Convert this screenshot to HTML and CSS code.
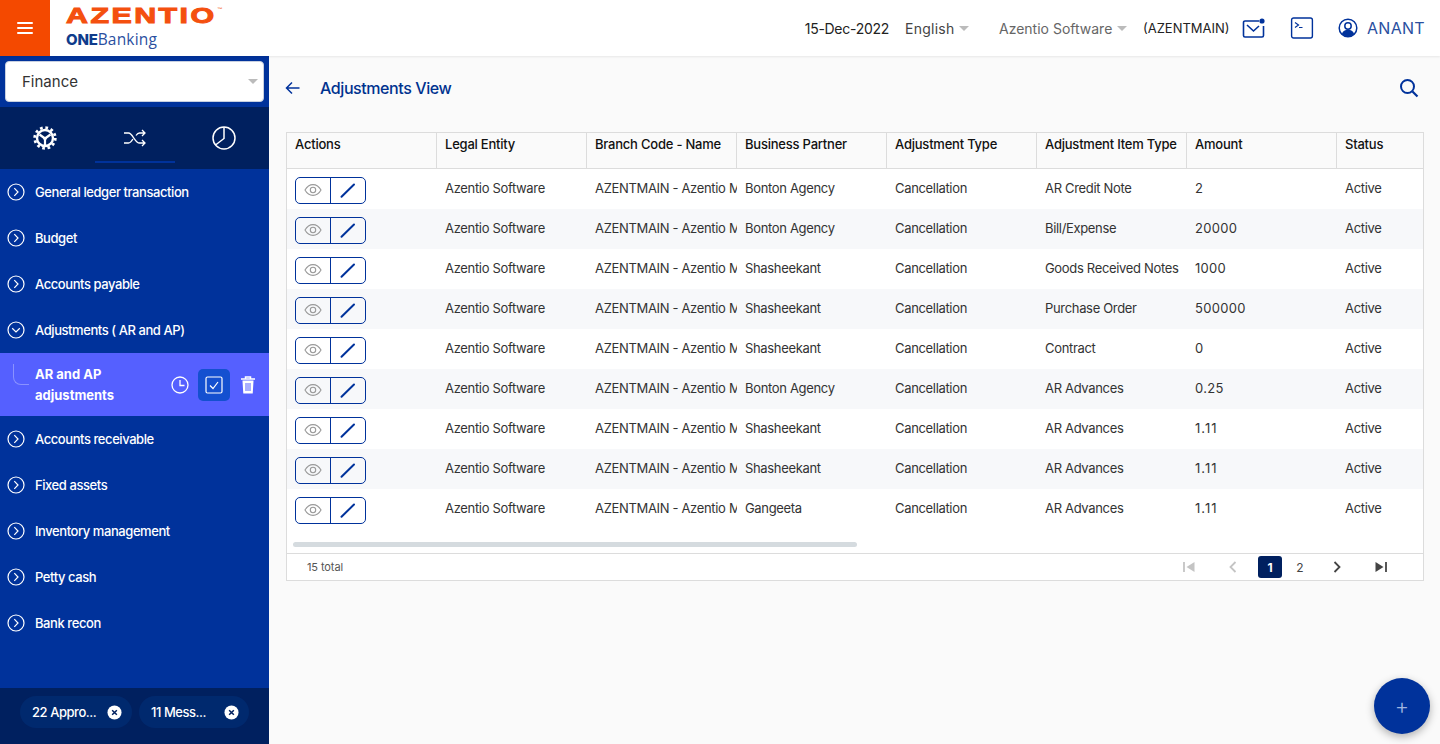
FILE: index.html
```html
<!DOCTYPE html>
<html lang="en">
<head>
<meta charset="utf-8">
<title>Adjustments View</title>
<link rel="stylesheet" href="styles.css">
</head>
<body>
<svg class="defs" width="0" height="0">
  <symbol id="eye" viewBox="0 0 18 14"><path d="M1 7c2-3.600 4.800-5.400 8-5.400S15 3.400 17 7c-2 3.600-4.800 5.400-8 5.400S3 10.600 1 7z" fill="none" stroke="currentColor" stroke-width="1.100"/><circle cx="9" cy="7" r="2.700" fill="none" stroke="currentColor" stroke-width="1.100"/></symbol>
  <symbol id="pen" viewBox="0 0 18 18"><path d="M2.500 15.800 15 3.500" fill="none" stroke="currentColor" stroke-width="2" stroke-linecap="round"/></symbol>
  <symbol id="right" viewBox="0 0 18 18"><circle cx="9" cy="9" r="8" fill="none" stroke="currentColor" stroke-width="1.200"/><path d="M7.300 5.200 11 9l-3.700 3.800" fill="none" stroke="currentColor" stroke-width="1.200"/></symbol>
  <symbol id="down" viewBox="0 0 18 18"><circle cx="9" cy="9" r="8" fill="none" stroke="currentColor" stroke-width="1.200"/><path d="M5.200 7.300 9 11l3.800-3.700" fill="none" stroke="currentColor" stroke-width="1.200"/></symbol>
  <symbol id="x" viewBox="0 0 16 16"><circle cx="8" cy="8" r="7.500" fill="#fff"/><path d="M5.500 5.500l5 5m0-5-5 5" stroke="#00205f" stroke-width="1.600"/></symbol>
</svg>
<div class="app">
  <header class="topbar">
    <button class="burger" aria-label="Menu"><span></span><span></span><span></span></button>
    <div class="logo">
      <div class="logo-main">AZENTIO<sup>™</sup></div>
      <div class="logo-sub"><b>ONE</b>Banking</div>
    </div>
    <div class="top-right">
      <span class="date">15-Dec-2022</span>
      <span class="lang">English<i class="caret"></i></span>
      <span class="company">Azentio Software<i class="caret"></i></span>
      <span class="branch">(AZENTMAIN)</span>
      <svg class="ic-mail" width="24" height="22" viewBox="0 0 24 22"><path d="M17 4H3a1.500 1.500 0 0 0-1.500 1.500v13A1.500 1.500 0 0 0 3 20h17a1.500 1.500 0 0 0 1.500-1.500V9" fill="none" stroke="#00329b" stroke-width="1.600"/><path d="M5 8l6.500 6L17 9" fill="none" stroke="#00329b" stroke-width="1.600"/><circle cx="20" cy="4" r="2.600" fill="#00329b"/></svg>
      <svg class="ic-term" width="24" height="22" viewBox="0 0 24 22"><rect x="1.600" y="1" width="20.800" height="20" rx="2" fill="none" stroke="#00329b" stroke-width="1.400"/><path d="M5 5.500 8.500 8 5 10.500M9 10.500h3.500" fill="none" stroke="#00329b" stroke-width="1.200"/></svg>
      <svg class="ic-user" width="20" height="20" viewBox="0 0 20 20"><circle cx="10" cy="10" r="8.800" fill="none" stroke="#00329b" stroke-width="1.500"/><circle cx="10" cy="8" r="3.200" fill="none" stroke="#00329b" stroke-width="1.500"/><path d="M3.800 16c1-3 3.300-4.200 6.200-4.200s5.200 1.200 6.200 4.200A8.800 8.800 0 0 1 10 18.800 8.800 8.800 0 0 1 3.800 16z" fill="#00329b"/></svg>
      <span class="user">ANANT</span>
    </div>
  </header>
  <div class="body">
    <aside class="sidebar">
      <div class="select-wrap"><div class="select">Finance<i class="caret"></i></div></div>
      <div class="tabs">
        <div class="tab">
          <svg width="24" height="24" viewBox="0 0 24 24"><circle cx="12" cy="12" r="10.300" fill="none" stroke="#fff" stroke-width="2.800" stroke-dasharray="2.700 2.700"/><circle cx="12" cy="12" r="8" fill="none" stroke="#fff" stroke-width="2.400"/><path d="M12 12.500 6.500 8.500M12 12.500l5.500-4M12 12.500V19" stroke="#fff" stroke-width="2.200"/><circle cx="12" cy="12.500" r="1.800" fill="#fff"/></svg>
        </div>
        <div class="tab tab-on">
          <svg width="24" height="20" viewBox="0 0 24 20"><path d="M1 5h4.500c4 0 6.500 10 11 10H22M1 15h4.500c1.800 0 3.200-2 4.400-4M13 7.500C14 6 15 5 16.500 5H22M19 2l3 3-3 3M19 12l3 3-3 3" fill="none" stroke="#fff" stroke-width="1.300"/></svg>
        </div>
        <div class="tab">
          <svg width="24" height="24" viewBox="0 0 24 24"><circle cx="12" cy="12" r="11" fill="none" stroke="#fff" stroke-width="1.500"/><path d="M12 1v11.500L3.500 19" fill="none" stroke="#fff" stroke-width="1.500"/></svg>
        </div>
      </div>
      <nav class="nav">
        <a class="nav-item"><svg width="18" height="18"><use href="#right"/></svg>General ledger transaction</a>
        <a class="nav-item"><svg width="18" height="18"><use href="#right"/></svg>Budget</a>
        <a class="nav-item"><svg width="18" height="18"><use href="#right"/></svg>Accounts payable</a>
        <a class="nav-item"><svg width="18" height="18"><use href="#down"/></svg>Adjustments ( AR and AP)</a>
        <div class="nav-active">
          <span class="elbow"></span>
          <span class="nav-active-label">AR and AP adjustments</span>
          <svg width="18" height="18" viewBox="0 0 18 18"><circle cx="9" cy="9" r="8" fill="none" stroke="#fff" stroke-width="1.300"/><path d="M9 4v5.500h4.500" fill="none" stroke="#fff" stroke-width="1.300"/></svg>
          <span class="check-box"><svg width="18" height="18" viewBox="0 0 18 18"><rect x="1" y="1" width="16" height="16" rx="1.500" fill="none" stroke="#fff" stroke-width="1.200"/><path d="M5 9.500l3 3 5-6.500" fill="none" stroke="#fff" stroke-width="1.200"/></svg></span>
          <svg width="16" height="20" viewBox="0 0 16 20"><path d="M1 4h14M5.500 4V2h5v2" fill="none" stroke="#fff" stroke-width="1.500"/><path d="M2.500 5.500h11l-.8 13H3.300z" fill="#fff"/><path d="M6 8v8M8 8v8M10 8v8" stroke="#5560ff" stroke-width="1"/></svg>
        </div>
        <a class="nav-item"><svg width="18" height="18"><use href="#right"/></svg>Accounts receivable</a>
        <a class="nav-item"><svg width="18" height="18"><use href="#right"/></svg>Fixed assets</a>
        <a class="nav-item"><svg width="18" height="18"><use href="#right"/></svg>Inventory management</a>
        <a class="nav-item"><svg width="18" height="18"><use href="#right"/></svg>Petty cash</a>
        <a class="nav-item"><svg width="18" height="18"><use href="#right"/></svg>Bank recon</a>
      </nav>
      <div class="chips">
        <span class="chip"><span class="chip-a">22 Appro...</span><svg width="15" height="15"><use href="#x"/></svg></span>
        <span class="chip"><span class="chip-b">11 Mess...</span><svg width="15" height="15"><use href="#x"/></svg></span>
      </div>
    </aside>
    <main class="main">
      <div class="title-row">
        <svg class="back" width="16" height="14" viewBox="0 0 16 14"><path d="M14.500 7H2M7 1.500 1.500 7 7 12.500" fill="none" stroke="#00329b" stroke-width="1.500"/></svg>
        <h1>Adjustments View</h1>
        <svg class="search" width="20" height="20" viewBox="0 0 20 20"><circle cx="8.500" cy="8.500" r="6.500" fill="none" stroke="#00329b" stroke-width="2"/><path d="M13.500 13.500 18.500 18.500" stroke="#00329b" stroke-width="2.200"/></svg>
      </div>
      <section class="panel">
        <div class="grid head">
          <div class="th">Actions</div><div class="th">Legal Entity</div><div class="th">Branch Code - Name</div><div class="th">Business Partner</div><div class="th">Adjustment Type</div><div class="th">Adjustment Item Type</div><div class="th">Amount</div><div class="th">Status</div>
        </div>
        <div class="rows">
          <div class="grid row"><div class="td"><span class="btns"><span class="b-eye"><svg width="18" height="14"><use href="#eye"/></svg></span><span class="b-pen"><svg width="18" height="18"><use href="#pen"/></svg></span></span></div><div class="td">Azentio Software</div><div class="td">AZENTMAIN - Azentio Main</div><div class="td">Bonton Agency</div><div class="td">Cancellation</div><div class="td">AR Credit Note</div><div class="td">2</div><div class="td">Active</div></div>
          <div class="grid row alt"><div class="td"><span class="btns"><span class="b-eye"><svg width="18" height="14"><use href="#eye"/></svg></span><span class="b-pen"><svg width="18" height="18"><use href="#pen"/></svg></span></span></div><div class="td">Azentio Software</div><div class="td">AZENTMAIN - Azentio Main</div><div class="td">Bonton Agency</div><div class="td">Cancellation</div><div class="td">Bill/Expense</div><div class="td">20000</div><div class="td">Active</div></div>
          <div class="grid row"><div class="td"><span class="btns"><span class="b-eye"><svg width="18" height="14"><use href="#eye"/></svg></span><span class="b-pen"><svg width="18" height="18"><use href="#pen"/></svg></span></span></div><div class="td">Azentio Software</div><div class="td">AZENTMAIN - Azentio Main</div><div class="td">Shasheekant</div><div class="td">Cancellation</div><div class="td">Goods Received Notes</div><div class="td">1000</div><div class="td">Active</div></div>
          <div class="grid row alt"><div class="td"><span class="btns"><span class="b-eye"><svg width="18" height="14"><use href="#eye"/></svg></span><span class="b-pen"><svg width="18" height="18"><use href="#pen"/></svg></span></span></div><div class="td">Azentio Software</div><div class="td">AZENTMAIN - Azentio Main</div><div class="td">Shasheekant</div><div class="td">Cancellation</div><div class="td">Purchase Order</div><div class="td">500000</div><div class="td">Active</div></div>
          <div class="grid row"><div class="td"><span class="btns"><span class="b-eye"><svg width="18" height="14"><use href="#eye"/></svg></span><span class="b-pen"><svg width="18" height="18"><use href="#pen"/></svg></span></span></div><div class="td">Azentio Software</div><div class="td">AZENTMAIN - Azentio Main</div><div class="td">Shasheekant</div><div class="td">Cancellation</div><div class="td">Contract</div><div class="td">0</div><div class="td">Active</div></div>
          <div class="grid row alt"><div class="td"><span class="btns"><span class="b-eye"><svg width="18" height="14"><use href="#eye"/></svg></span><span class="b-pen"><svg width="18" height="18"><use href="#pen"/></svg></span></span></div><div class="td">Azentio Software</div><div class="td">AZENTMAIN - Azentio Main</div><div class="td">Bonton Agency</div><div class="td">Cancellation</div><div class="td">AR Advances</div><div class="td">0.25</div><div class="td">Active</div></div>
          <div class="grid row"><div class="td"><span class="btns"><span class="b-eye"><svg width="18" height="14"><use href="#eye"/></svg></span><span class="b-pen"><svg width="18" height="18"><use href="#pen"/></svg></span></span></div><div class="td">Azentio Software</div><div class="td">AZENTMAIN - Azentio Main</div><div class="td">Shasheekant</div><div class="td">Cancellation</div><div class="td">AR Advances</div><div class="td">1.11</div><div class="td">Active</div></div>
          <div class="grid row alt"><div class="td"><span class="btns"><span class="b-eye"><svg width="18" height="14"><use href="#eye"/></svg></span><span class="b-pen"><svg width="18" height="18"><use href="#pen"/></svg></span></span></div><div class="td">Azentio Software</div><div class="td">AZENTMAIN - Azentio Main</div><div class="td">Shasheekant</div><div class="td">Cancellation</div><div class="td">AR Advances</div><div class="td">1.11</div><div class="td">Active</div></div>
          <div class="grid row"><div class="td"><span class="btns"><span class="b-eye"><svg width="18" height="14"><use href="#eye"/></svg></span><span class="b-pen"><svg width="18" height="18"><use href="#pen"/></svg></span></span></div><div class="td">Azentio Software</div><div class="td">AZENTMAIN - Azentio Main</div><div class="td">Gangeeta</div><div class="td">Cancellation</div><div class="td">AR Advances</div><div class="td">1.11</div><div class="td">Active</div></div>
        </div>
        <div class="hscroll"><span class="thumb"></span></div>
        <div class="foot">
          <span class="total">15 total</span>
          <div class="pager">
            <svg class="p-first" width="12" height="12" viewBox="0 0 12 12"><path d="M1 1v10" stroke="#c4c4c4" stroke-width="1.800"/><path d="M11.500 1v10L3.500 6z" fill="#c4c4c4"/></svg>
            <svg class="p-prev" width="10" height="12" viewBox="0 0 10 12"><path d="M7.500 1 2.500 6l5 5" fill="none" stroke="#c4c4c4" stroke-width="1.800"/></svg>
            <span class="p-on">1</span>
            <span class="p-num">2</span>
            <svg class="p-next" width="10" height="12" viewBox="0 0 10 12"><path d="M2.500 1l5 5-5 5" fill="none" stroke="#444" stroke-width="1.800"/></svg>
            <svg class="p-last" width="12" height="12" viewBox="0 0 12 12"><path d="M.5 1v10l8-5z" fill="#444"/><path d="M11 1v10" stroke="#444" stroke-width="1.800"/></svg>
          </div>
        </div>
      </section>
    </main>
  </div>
  <button class="fab" aria-label="Add">+</button>
</div>
</body>
</html>
```
FILE: styles.css
```css
* { box-sizing: border-box; }
html, body { margin: 0; height: 100%; overflow: hidden; }
body { font-family: "Inter", "Liberation Sans", sans-serif; color: #222; background: #fafafa; }
.defs { position: absolute; }
.app { position: relative; width: 1440px; height: 744px; display: flex; flex-direction: column; }

/* top bar */
.topbar { height: 56px; flex: none; display: flex; align-items: stretch; background: #fff; box-shadow: 0 1px 2px rgba(0,0,0,.08); position: relative; z-index: 2; }
.burger { width: 50px; border: 0; padding: 0; background: #f44900; display: flex; flex-direction: column; align-items: center; justify-content: center; gap: 3px; }
.burger span { width: 16px; height: 2px; background: #fff; border-radius: 1px; }
.logo { margin-left: 16px; padding-top: 4px; }
.logo-main { font-family: "Liberation Sans", sans-serif; font-weight: 700; font-size: 22px; line-height: 23px; letter-spacing: 1.800px; color: #f4500f; -webkit-text-stroke: 1px #f4500f; transform-origin: left; transform: scaleX(1.380); white-space: nowrap; width: 110px; }
.logo-main sup { font-size: 4px; font-weight: 400; vertical-align: 13px; line-height: 0; letter-spacing: 0; -webkit-text-stroke: 0; }
.logo-sub { margin-top: 2px; font-family: "Open Sans", sans-serif; font-size: 15.500px; line-height: 20px; letter-spacing: .2px; color: #2a4f9f; }
.logo-sub b { color: #0f3c8c; font-weight: 800; font-family: "Inter", sans-serif; font-size: 15px; letter-spacing: -.2px; }
.top-right { margin-left: auto; display: flex; align-items: center; font-size: 14px; padding-right: 15px; }
.date { color: #222; margin-right: 16px; letter-spacing: -.28px; }
.lang { color: #444; width: 94px; display: flex; align-items: center; letter-spacing: .25px; }
.company { color: #666; width: 144px; display: flex; align-items: center; }
.branch { color: #222; font-size: 13px; width: 99px; white-space: nowrap; }
.caret { display: inline-block; margin-left: 5px; border: 5px solid transparent; border-top: 5px solid #bbb; border-bottom: 0; }
.ic-mail { width: 24px; margin-right: 24px; }
.ic-term { margin-right: 24px; }
.ic-user { margin-right: 9px; }
.user { color: #2a4f9f; font-size: 16px; letter-spacing: .3px; }

/* shell */
.body { flex: 1; display: flex; min-height: 0; }
.sidebar { width: 269px; flex: none; background: #00329b; display: flex; flex-direction: column; color: #fff; }
.select-wrap { padding: 5px; height: 51px; flex: none; }
.select { height: 41px; background: #fff; border: 1px solid #c8d0e0; border-radius: 4px; color: #333; font-size: 15px; padding: 0 5px 0 16px; display: flex; align-items: center; justify-content: space-between; }
.tabs { height: 62px; flex: none; background: #00205f; display: flex; }
.tab { width: 90px; flex: none; display: flex; align-items: center; justify-content: center; }
.tab:first-child { width: 89px; }
.tab-on { width: 80px; margin: 0 4px 6px 6px; border-bottom: 2px solid #00329b; padding-top: 8px; }
.nav { flex: 1; display: flex; flex-direction: column; }
.nav-item { height: 46px; display: flex; align-items: center; gap: 10px; padding-left: 7px; font-size: 13px; font-weight: 500; letter-spacing: -.43px; white-space: nowrap; }
.nav-active { height: 63px; background: #5560ff; display: flex; align-items: center; padding-left: 35px; position: relative; font-size: 13px; font-weight: 700; }
.nav-active-label { width: 127px; line-height: 21px; margin-right: 9px; flex: none; }
.elbow { position: absolute; left: 13px; top: 11px; width: 16px; height: 21px; border-left: 1px solid #8a92ff; border-bottom: 1px solid #8a92ff; border-bottom-left-radius: 8px; }
.check-box { width: 32px; height: 32px; border-radius: 5px; background: #1450d0; display: flex; align-items: center; justify-content: center; margin: 0 10px 0 9px; }
.chips { height: 56px; flex: none; background: #00205f; display: flex; align-items: center; gap: 7px; padding: 0 0 8px 20px; }
.chip { height: 32px; border-radius: 16px; background: #00296e; display: flex; align-items: center; font-size: 13px; font-weight: 500; padding: 0 10px 0 12px; letter-spacing: -.45px; white-space: nowrap; }
.chip-a { width: 75px; }
.chip-b { width: 73px; }

/* main */
.main { flex: 1; min-width: 0; padding: 0 16px 0 17px; }
.title-row { height: 76px; display: flex; align-items: center; padding-bottom: 12px; }
.back { margin: 0 19px 0 -1px; }
h1 { margin: 0; font-size: 16px; font-weight: 500; color: #00328f; letter-spacing: -.42px; }
.search { margin-left: auto; margin-right: 5px; }
.panel { background: #fff; border: 1px solid #dcdcdc; height: 449px; width: 1138px; overflow: hidden; }
.grid { display: grid; grid-template-columns: repeat(8, 150px); }
.head { height: 36px; background: #fafafa; border-bottom: 1px solid #dcdcdc; }
.th { font-size: 13px; font-weight: 500; color: #111; padding: 3px 8px 0; border-right: 1px solid #dcdcdc; letter-spacing: -.22px; white-space: nowrap; }
.th:last-child { border-right: 0; }
.row { height: 40px; }
.alt { background: #f7f8fa; }
.td { font-size: 13px; color: #333; padding-left: 8px; display: flex; align-items: center; white-space: nowrap; overflow: hidden; letter-spacing: -.33px; padding-bottom: 2px; }
.td:first-child { padding-bottom: 0; padding-top: 2px; }
.td:nth-child(7) { letter-spacing: .3px; }
.row:nth-child(n+7) .td:nth-child(7) { letter-spacing: 1px; }
.btns { width: 71px; height: 27px; border: 1px solid #00329b; border-radius: 5px; display: flex; }
.b-eye { width: 35px; border-right: 1px solid #00329b; display: flex; align-items: center; justify-content: center; color: #999; }
.b-pen { flex: 1; display: flex; align-items: center; justify-content: center; color: #00329b; }
.hscroll { height: 24px; padding: 13px 0 0 6px; }
.thumb { display: block; width: 564px; height: 5px; border-radius: 3px; background: #d5dbdf; }
.foot { height: 27px; border-top: 1px solid #dcdcdc; display: flex; align-items: center; justify-content: space-between; }
.total { font-size: 11px; color: #555; padding-left: 20px; letter-spacing: -.1px; }
.pager { display: flex; align-items: center; padding-right: 36px; }
.p-prev { margin-left: 33px; }
.p-on { margin-left: 20px; width: 24px; height: 22px; border-radius: 3px; background: #00205f; color: #fff; font-size: 12px; font-weight: 700; display: flex; align-items: center; justify-content: center; }
.p-num { width: 36px; text-align: center; font-size: 12px; color: #444; }
.p-next { margin-left: 14px; }
.p-last { margin-left: 33px; }

.fab { position: absolute; right: 10px; bottom: 10px; width: 56px; height: 56px; border: 0; border-radius: 50%; background: #00329b; color: #9fb4e0; font-size: 22px; font-weight: 300; font-family: "Inter", sans-serif; box-shadow: 0 3px 8px rgba(0,0,0,.3); }
```
